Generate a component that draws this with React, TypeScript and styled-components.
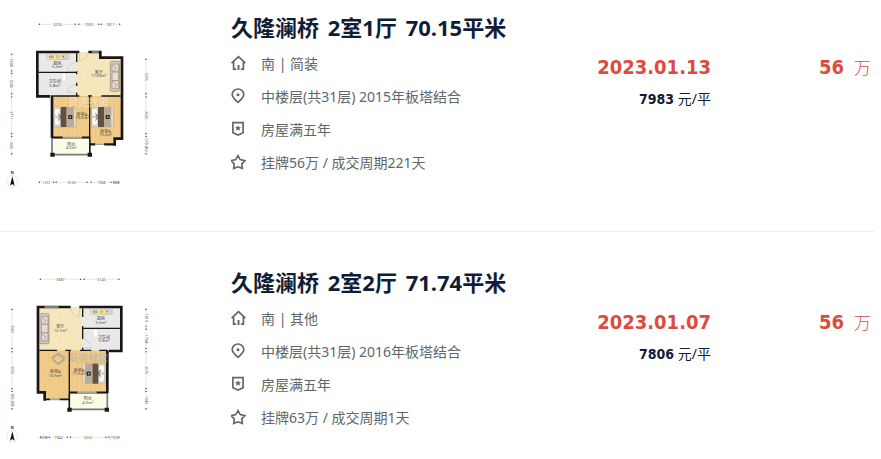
import React from "react";
import styled, { createGlobalStyle } from "styled-components";

const GlobalStyle = createGlobalStyle`
  body {
    margin: 0;
    background: #fff;
    font-family: "Noto Sans", "Noto Sans CJK SC", sans-serif;
  }
`;

const List = styled.ul`
  list-style: none;
  margin: 0 7px 0 0;
  padding: 0;
`;

const Listing = styled.li`
  display: flex;
  align-items: flex-start;
  padding: 10px 0 31px;

  & + & {
    border-top: 1px solid #eceeee;
    padding-top: 33px;
    padding-bottom: 0;
  }
`;

const PlanLink = styled.a`
  flex: none;
  width: 231px;
`;

const PlanSvg = styled.svg`
  display: block;
  width: 160px;
  height: 190px;
`;

const Main = styled.div`
  flex: 1;
  min-width: 0;
`;

const Title = styled.h2`
  margin: 1px 0 3px;
  font-size: 22px;
  line-height: 32px;
  font-weight: 700;
  white-space: nowrap;
`;

const TitleLink = styled.a`
  color: #101d37;
  text-decoration: none;
`;

const TitlePart = styled.span`
  & + & {
    margin-left: 3px;
  }
`;

const Columns = styled.div`
  display: flex;
  align-items: flex-start;
`;

const Details = styled.ul`
  flex: 1;
  list-style: none;
  margin: 0;
  padding: 0;
`;

const Detail = styled.li`
  display: flex;
  align-items: center;
  gap: 15px;
  height: 33px;
  color: #616669;
  font-size: 14px;
  white-space: nowrap;
`;

const IconSvg = styled.svg`
  flex: none;
  width: 15px;
  height: 16px;
  fill: none;
  stroke: #62686a;
  stroke-width: 1.7;
`;

const Deal = styled.div`
  text-align: right;
  padding-top: 6px;
`;

const DealDate = styled.div`
  color: #db4c3f;
  font-family: "DejaVu Sans Condensed", "DejaVu Sans", sans-serif;
  font-size: 20px;
  font-weight: 700;
  line-height: 30px;
`;

const UnitPrice = styled.div`
  color: #101d37;
  font-size: 14px;
  line-height: 34px;

  strong {
    font-family: "DejaVu Sans Condensed", "DejaVu Sans", sans-serif;
  }
`;

const Total = styled.div`
  display: flex;
  align-items: baseline;
  justify-content: flex-end;
  gap: 10px;
  width: 160px;
  margin-right: 3px;
  padding-top: 6px;
  color: #db4c3f;
  font-size: 17px;
  font-weight: 300;
  line-height: 30px;

  strong {
    font-family: "DejaVu Sans Condensed", "DejaVu Sans", sans-serif;
    font-size: 20px;
    font-weight: 700;
  }
`;

const PlanText = styled.text`
  font-size: 12px;
  fill: #4a4540;
  text-anchor: middle;
`;

const DimText = styled.text`
  font-size: 11px;
  fill: #555;
  text-anchor: middle;
`;

const Watermark = styled.text<{ $color: string }>`
  font-size: 30px;
  font-weight: 700;
  fill: ${({ $color }) => $color};
  opacity: 0.5;
`;

type IconName = "house" | "pin" | "badge" | "star";

function Icon({ name }: { name: IconName }) {
  return (
    <IconSvg viewBox="0 0 15 16" aria-hidden="true">
      {name === "house" && (
        <>
          <path d="M0.6 8.2 7.5 1.6 14.4 8.2M2.6 6.8v7.4h2.6M12.4 6.8v7.4H9.8" />
          <path d="M7.5 10v5" strokeWidth="2" />
        </>
      )}
      {name === "pin" && (
        <>
          <path d="M7 14.4C3.5 11.5 1.2 9.2 1.2 6.6a5.8 5.6 0 0 1 11.6 0C12.8 9.2 10.5 11.5 7 14.4Z" />
          <circle cx="7" cy="6.8" r="1.5" fill="#62686a" stroke="none" />
        </>
      )}
      {name === "badge" && (
        <>
          <path d="M1.9 1.6h10.2v10.2L7 14 1.9 11.8Z" />
          <path
            d="m7 4.2.9 1.9 2.1.2-1.6 1.4.5 2.1L7 8.7 5.1 9.8l.5-2.1L4 6.3l2.1-.2Z"
            fill="#62686a"
            stroke="none"
          />
        </>
      )}
      {name === "star" && (
        <path d="m7 1.7 2.2 3.9 4.7 1-3.1 3.2.5 4.6L7 12.8l-4.3 1.6.5-4.6L.1 6.6l4.7-1Z" />
      )}
    </IconSvg>
  );
}

function Patterns({ id }: { id: string }) {
  return (
    <defs>
      <pattern id={`${id}-wood`} width="14" height="60" patternUnits="userSpaceOnUse">
        <rect width="14" height="60" fill="#f1cb88" />
        <path d="M7 0v60M0 20h7M7 46h7" stroke="#e7ba74" />
        <path d="M0 0v60" stroke="#f5d79e" />
      </pattern>
      <pattern id={`${id}-tile`} width="18" height="18" patternUnits="userSpaceOnUse">
        <rect width="18" height="18" fill="#f6e7bd" />
        <path d="M0 18 18 0M0 0l18 18" stroke="#f0dfae" />
      </pattern>
    </defs>
  );
}

function Bed({ x, y, flip }: { x: number; y: number; flip?: boolean }) {
  return (
    <g transform={flip ? `translate(${x + 66} ${y}) scale(-1 1)` : `translate(${x} ${y})`}>
      <rect width="66" height="60" fill="#e7ded0" stroke="#a08e78" />
      <rect x="2" y="5" width="16" height="22" rx="4" fill="#fff" stroke="#99856c" />
      <rect x="2" y="32" width="16" height="22" rx="4" fill="#fff" stroke="#99856c" />
      <path d="m10 16 6 14-6 14 12-12V26Z" fill="#7597a5" />
      <rect x="20" width="18" height="60" fill="#65503f" />
      <rect x="38" width="22" height="60" fill="#b8ab9b" />
      <rect x="43" y="24" width="12" height="12" fill="#292725" />
      <rect x="47" y="28" width="4" height="4" fill="#ddd" />
    </g>
  );
}

function Sofa({ x, y }: { x: number; y: number }) {
  return (
    <g transform={`translate(${x} ${y})`} stroke="#77695f" strokeWidth="1.5">
      <rect width="28" height="90" rx="4" fill="#d8cbbf" />
      <rect x="5" y="8" width="20" height="24" rx="3" fill="#e7dcd1" />
      <rect x="5" y="32" width="20" height="26" rx="3" fill="#e7dcd1" />
      <rect x="5" y="58" width="20" height="24" rx="3" fill="#e7dcd1" />
      <path d="m8 12 10 8-8 10M8 62l12 8-8 10" fill="none" />
    </g>
  );
}

function Counter({ x, y }: { x: number; y: number }) {
  return (
    <g transform={`translate(${x} ${y})`}>
      <rect width="66" height="17" fill="#eee4be" stroke="#aaa18a" />
      <path d="M8 5v7M13 4v9M18 5v7" stroke="#555" strokeWidth="2" />
      <rect x="27" y="3" width="11" height="11" fill="#ebc84e" />
      <rect x="44" y="3" width="18" height="11" rx="3" fill="#ddd" stroke="#999" />
      <circle cx="50" cy="8" r="2" fill="#4b4b4b" />
    </g>
  );
}

function Compass() {
  return (
    <g>
      <text x="37" y="491" fontSize="11" fontWeight="700" textAnchor="middle" fill="#222">
        N
      </text>
      <circle cx="37" cy="514" r="17" fill="#fff" stroke="#b5b5b5" />
      <path d="m37 499 7 28-7-5-7 5Z" fill="#111" />
    </g>
  );
}

interface Dim {
  from: number;
  to: number;
  label: string;
}

function Dims({ at, items, vertical }: { at: number; items: Dim[]; vertical?: boolean }) {
  return (
    <g transform={vertical ? `translate(${at} 0) rotate(90)` : `translate(0 ${at})`}>
      {items.map(({ from, to, label }) => {
        const mid = (from + to) / 2;
        const half = label.length * 3 + 2;
        return (
          <g key={from}>
            <path
              d={`M${from} 0H${Math.max(from, mid - half)}M${Math.min(to, mid + half)} 0H${to}`}
              stroke="#b4b4b4"
            />
            <path d={`m${from} 0 5-3v6ZM${to} 0l-5-3v6Z`} fill="#555" />
            <DimText x={mid} y="4">
              {label}
            </DimText>
          </g>
        );
      })}
    </g>
  );
}

function Room({ x, y, name, area }: { x: number; y: number; name: string; area: string }) {
  return (
    <>
      <PlanText x={x} y={y}>{name}</PlanText>
      <PlanText x={x} y={y + 11}>{area}</PlanText>
    </>
  );
}

function FirstPlan() {
  return (
    <PlanSvg viewBox="0 0 480 570" role="img" aria-label="2室1厅户型图">
      <Patterns id="a" />
      <path d="M112 126H234V256H112Z" fill="#e8e9e8" />
      <path d="M230 126H300V147H366V258H230Z" fill="url(#a-tile)" />
      <path d="M156 258H366V386H344V403H270V382H156Z" fill="url(#a-wood)" />
      <path d="M156 384H270V434H156Z" fill="#fcfde6" stroke="#777" strokeWidth="5" />
      <g fill="none" stroke="#171717" strokeWidth="8">
        <path d="M238 126H112V259H150M156 256V384M265 126H305M301 122V143H366V386H344V407" />
        <path d="M156 382H188M246 382H270" strokeWidth="5" />
        <path d="M116 187H231M230 130V156M230 184V193M230 218V228M230 248V258M160 258H238M264 258H276M304 258H362M269 258V384M269 384V432" strokeWidth="4" />
        <path d="M270 403H286M312 403H344" strokeWidth="7" />
      </g>
      <path d="M276 126H296M286 403H313M188 382H246" stroke="#a1a4a5" strokeWidth="4" />
      <path d="M151 428h13v12h-13ZM263 428h13v12h-13Z" fill="#171717" />
      <path
        d="M238 126v27q25-5 26-27M230 156q-24 4-28 28h28M230 222q-24 4-28 26h28M238 258q2 26 27 26v-26M304 258q-2 26-29 26v-26"
        fill="none"
        stroke="#a9a59b"
      />
      <Counter x={141} y={132} />
      <rect x="186" y="190" width="12" height="24" rx="3" fill="#fff" stroke="#bbb" />
      <Sofa x={331} y={154} />
      <Bed x={162} y={291} />
      <Bed x={274} y={291} />
      <Watermark x={205} y={288} $color="#fff1d4">贝壳找房</Watermark>
      <Room x={172} y={164} name="厨房" area="5.2m²" />
      <Room x={164} y={219} name="卫生间" area="5.8m²" />
      <Room x={296} y={191} name="客厅" area="17.09m²" />
      <Room x={246} y={317} name="卧室A" area="13.0m²" />
      <Room x={317} y={368} name="卧室B" area="10.2m²" />
      <Room x={214} y={407} name="阳台" area="4.5m²" />
      <Dims at={43} items={[{ from: 115, to: 229, label: "3226" }, { from: 233, to: 299, label: "1900" }, { from: 300, to: 362, label: "1811" }]} />
      <Dims at={517} items={[{ from: 115, to: 164, label: "1251" }, { from: 165, to: 265, label: "3105" }, { from: 270, to: 337, label: "1968" }, { from: 338, to: 360, label: "686" }]} />
      <Dims vertical at={35} items={[{ from: 130, to: 186, label: "1808" }, { from: 187, to: 255, label: "2006" }, { from: 257, to: 374, label: "3711" }, { from: 376, to: 435, label: "1606" }]} />
      <Dims vertical at={438} items={[{ from: 145, to: 255, label: "3355" }, { from: 257, to: 374, label: "3505" }, { from: 376, to: 435, label: "679,452" }]} />
      <Compass />
    </PlanSvg>
  );
}

function SecondPlan() {
  return (
    <PlanSvg viewBox="0 0 480 570" role="img" aria-label="2室2厅户型图">
      <Patterns id="b" />
      <path d="M114 126H248V258H114Z" fill="url(#b-tile)" />
      <path d="M248 126H364V256H248Z" fill="#e8e9e8" />
      <path d="M114 256H322V382H208V403H134V382H114Z" fill="url(#b-wood)" />
      <path d="M208 384H322V433H208Z" fill="#fcfde6" stroke="#777" strokeWidth="5" />
      <g fill="none" stroke="#171717" strokeWidth="8">
        <path d="M212 126H114V382H134V407M238 126H364V258H327M322 256V384" />
        <path d="M134 403H150M178 403H208M208 382H233M289 382H322" strokeWidth="5" />
        <path d="M248 130V156M248 183V222M248 248V256M248 190H360M118 256H171M196 256H213M240 256H274M298 256H322M208 256V430" strokeWidth="4" />
      </g>
      <path d="M134 126H176M150 403H179M232 382H290" stroke="#a1a4a5" strokeWidth="5" />
      <path d="M202 428h13v12h-13ZM314 428h13v12h-13Z" fill="#171717" />
      <path
        d="M238 126v30q-25-5-26-30M248 222q24 4 27 26h-27M171 256q0 26 25 26v-26M240 256q2 26-27 26v-26M298 256q-2 24-24 24v-24"
        fill="none"
        stroke="#a9a59b"
      />
      <Counter x={272} y={132} />
      <rect x="280" y="193" width="13" height="24" rx="3" fill="#fff" stroke="#bbb" />
      <Sofa x={119} y={146} />
      <Bed x={249} y={296} flip />
      <g fill="none" stroke="#8996a5" strokeWidth="6" opacity="0.6">
        <path d="m155 281 20-15 20 15M158 284l17 13 17-13" />
      </g>
      <Watermark x={205} y={292} $color="#a9afb5">贝壳找房</Watermark>
      <Room x={181} y={190} name="客厅" area="12.7m²" />
      <Room x={303} y={166} name="厨房" area="5.5m²" />
      <Room x={312} y={221} name="卫生间" area="5.6m²" />
      <Room x={166} y={324} name="卧室A" area="10.5m²" />
      <Room x={237} y={320} name="卧室B" area="11.5m²" />
      <Room x={263} y={406} name="阳台" area="4.5m²" />
      <Dims at={43} items={[{ from: 118, to: 245, label: "3687" }, { from: 249, to: 360, label: "3145" }]} />
      <Dims at={517} items={[{ from: 118, to: 144, label: "696" }, { from: 145, to: 205, label: "1944" }, { from: 208, to: 321, label: "3202" }, { from: 323, to: 360, label: "1163" }]} />
      <Dims vertical at={36} items={[{ from: 130, to: 254, label: "3503" }, { from: 257, to: 374, label: "3555" }, { from: 376, to: 435, label: "906,806" }]} />
      <Dims vertical at={438} items={[{ from: 130, to: 187, label: "1819" }, { from: 189, to: 254, label: "1704" }, { from: 257, to: 374, label: "3576" }, { from: 376, to: 435, label: "1542" }]} />
      <Compass />
    </PlanSvg>
  );
}

const listings = [
  {
    title: ["久隆澜桥", "2室1厅", "70.15平米"],
    plan: <FirstPlan />,
    details: ["南 | 简装", "中楼层(共31层) 2015年板塔结合", "房屋满五年", "挂牌56万 / 成交周期221天"],
    date: "2023.01.13",
    unit: "7983",
    total: "56",
  },
  {
    title: ["久隆澜桥", "2室2厅", "71.74平米"],
    plan: <SecondPlan />,
    details: ["南 | 其他", "中楼层(共31层) 2016年板塔结合", "房屋满五年", "挂牌63万 / 成交周期1天"],
    date: "2023.01.07",
    unit: "7806",
    total: "56",
  },
];

const icons: IconName[] = ["house", "pin", "badge", "star"];

export default function App() {
  return (
    <>
      <GlobalStyle />
      <List>
        {listings.map((item) => (
          <Listing key={item.date}>
            <PlanLink href="#">{item.plan}</PlanLink>
            <Main>
              <Title>
                <TitleLink href="#">
                  <TitlePart>{item.title[0]}</TitlePart>{" "}
                  <TitlePart>{item.title[1]}</TitlePart>{" "}
                  <TitlePart>{item.title[2]}</TitlePart>
                </TitleLink>
              </Title>
              <Columns>
                <Details>
                  {item.details.map((text, i) => (
                    <Detail key={text}>
                      <Icon name={icons[i]} />
                      <span>{text}</span>
                    </Detail>
                  ))}
                </Details>
                <Deal>
                  <DealDate>{item.date}</DealDate>
                  <UnitPrice>
                    <strong>{item.unit}</strong> 元/平
                  </UnitPrice>
                </Deal>
                <Total>
                  <strong>{item.total}</strong>
                  <span>万</span>
                </Total>
              </Columns>
            </Main>
          </Listing>
        ))}
      </List>
    </>
  );
}
